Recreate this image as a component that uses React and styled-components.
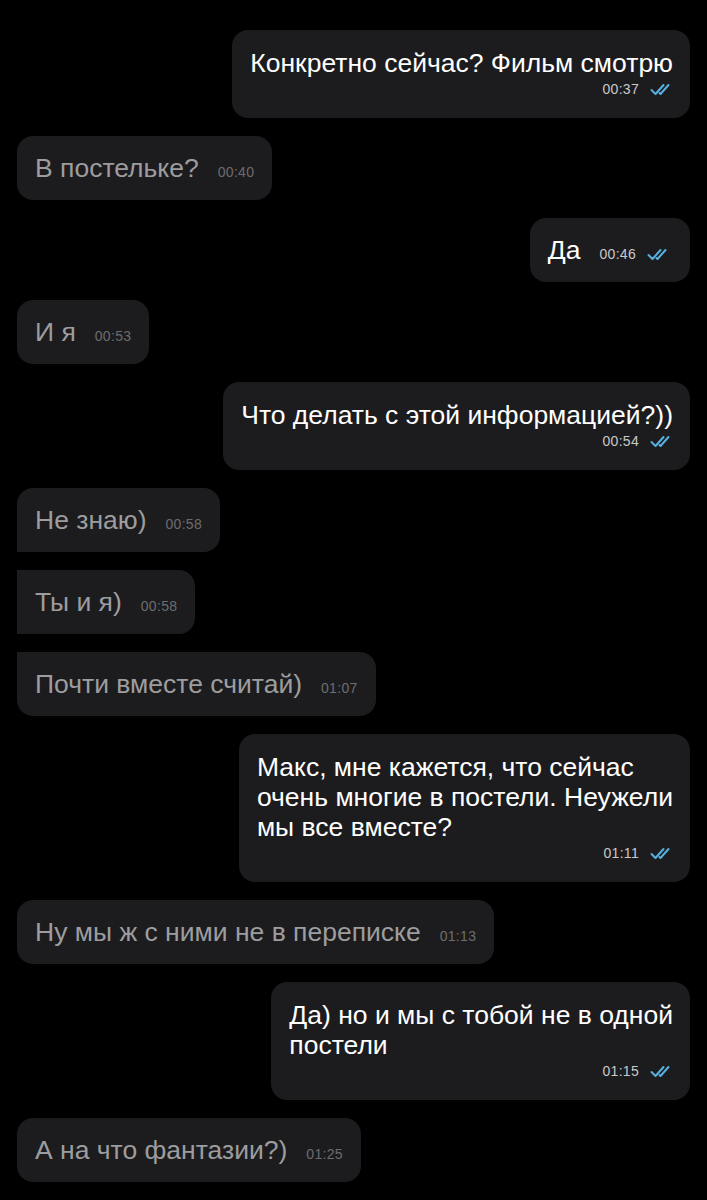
import React from "react";
import styled, { createGlobalStyle, css } from "styled-components";

const Global = createGlobalStyle`
  html, body { margin: 0; padding: 0; background: #000; }
  body { font-family: "Liberation Sans", Arial, sans-serif; -webkit-font-smoothing: antialiased; }
`;

const Page = styled.div`
  display: flex;
  flex-direction: column;
  gap: 18px;
  padding: 30px 17px 20px;
  min-height: 1200px;
  box-sizing: border-box;
  background: #000;
`;

const Row = styled.div`
  display: flex;
  justify-content: ${(p) => (p.$out ? "flex-end" : "flex-start")};
`;

const R = 16;

const Bubble = styled.div`
  background: #1c1c1e;
  border-radius: ${R}px;
  ${(p) => p.$square === "bottom" && css`border-bottom-left-radius: 0;`}
  ${(p) => p.$square === "both" && css`border-top-left-radius: 0; border-bottom-left-radius: 0;`}
  ${(p) => p.$square === "top" && css`border-top-left-radius: 0;`}
  color: ${(p) => (p.$out ? "#ffffff" : "#9d9d9f")};
  font-size: 26.5px;
  line-height: 30px;
  box-sizing: border-box;
`;

const InlineBubble = styled(Bubble)`
  display: flex;
  align-items: baseline;
  gap: 19px;
  padding: 17px ${(p) => (p.$out ? 20 : 18)}px 17px 18px;
  white-space: nowrap;
`;

const BlockBubble = styled(Bubble)`
  padding: 18px 17px 21px 18px;
`;

const Text = styled.div`
  white-space: nowrap;
`;

const Meta = styled.div`
  display: flex;
  align-items: center;
  justify-content: flex-end;
  gap: 11px;
  height: 16px;
  margin-top: ${(p) => (p.$block ? "3px" : "0")};
`;

const Time = styled.span`
  font-size: 14px;
  line-height: 16px;
  color: ${(p) => (p.$out ? "#c9c9cb" : "#6c6c6e")};
  letter-spacing: 0.3px;
`;

const Checks = () => (
  <svg width="23" height="13" viewBox="0 0 23 13" fill="none">
    <path d="M1.5 7 L5.5 11 L13.5 2" stroke="#56b0e0" strokeWidth="2" strokeLinecap="round" strokeLinejoin="round" />
    <path d="M9.5 10 L10.5 11 L18.5 2" stroke="#56b0e0" strokeWidth="2" strokeLinecap="round" strokeLinejoin="round" />
  </svg>
);

const messages = [
  { out: true, lines: ["Конкретно сейчас? Фильм смотрю"], time: "00:37", block: true },
  { out: false, lines: ["В постельке?"], time: "00:40" },
  { out: true, lines: ["Да"], time: "00:46" },
  { out: false, lines: ["И я"], time: "00:53" },
  { out: true, lines: ["Что делать с этой информацией?))"], time: "00:54", block: true },
  { out: false, lines: ["Не знаю)"], time: "00:58", square: "bottom" },
  { out: false, lines: ["Ты и я)"], time: "00:58", square: "both" },
  { out: false, lines: ["Почти вместе считай)"], time: "01:07", square: "top" },
  {
    out: true,
    lines: ["Макс, мне кажется, что сейчас", "очень многие в постели. Неужели", "мы все вместе?"],
    time: "01:11",
    block: true,
  },
  { out: false, lines: ["Ну мы ж с ними не в переписке"], time: "01:13" },
  { out: true, lines: ["Да) но и мы с тобой не в одной", "постели"], time: "01:15", block: true },
  { out: false, lines: ["А на что фантазии?)"], time: "01:25" },
];

export default function App() {
  return (
    <>
      <Global />
      <Page>
        {messages.map((m, i) => (
          <Row key={i} $out={m.out}>
            {m.block ? (
              <BlockBubble $out={m.out} $square={m.square}>
                {m.lines.map((l, j) => (
                  <Text key={j}>{l}</Text>
                ))}
                <Meta $block>
                  <Time $out={m.out}>{m.time}</Time>
                  {m.out && <Checks />}
                </Meta>
              </BlockBubble>
            ) : (
              <InlineBubble $out={m.out} $square={m.square}>
                <Text>{m.lines[0]}</Text>
                <Meta>
                  <Time $out={m.out}>{m.time}</Time>
                  {m.out && <Checks />}
                </Meta>
              </InlineBubble>
            )}
          </Row>
        ))}
      </Page>
    </>
  );
}
